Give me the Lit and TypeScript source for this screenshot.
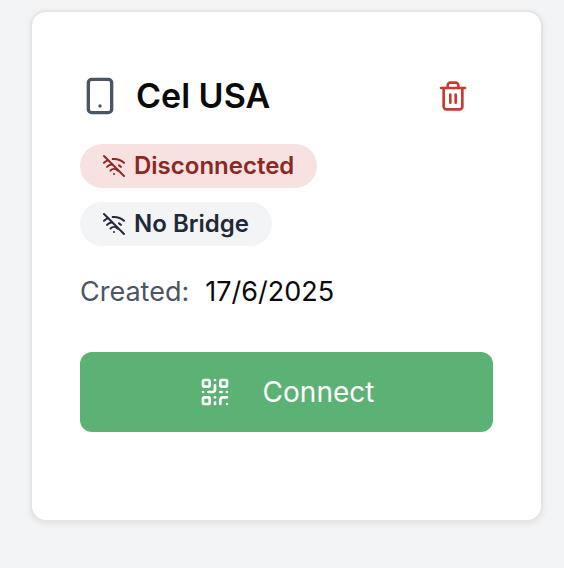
import { LitElement, html, svg, css } from "lit";
import { customElement, property } from "lit/decorators.js";

const glyphs = {
  phone: svg`<rect width="14" height="20" x="5" y="2" rx="2" ry="2"/><path d="M12 18h.01"/>`,
  trash: svg`<path d="M3 6h18"/><path d="M19 6v14c0 1-1 2-2 2H7c-1 0-2-1-2-2V6"/><path d="M8 6V4c0-1 1-2 2-2h4c1 0 2 1 2 2v2"/><path d="M10 11v6"/><path d="M14 11v6"/>`,
  wifiOff: svg`<path d="M12 20h.01"/><path d="M8.5 16.429a5 5 0 0 1 7 0"/><path d="M5 12.859a10 10 0 0 1 5.17-2.69"/><path d="M19 12.859a10 10 0 0 0-2.007-1.523"/><path d="M2 8.82a15 15 0 0 1 4.177-2.643"/><path d="M22 8.82a15 15 0 0 0-11.288-3.764"/><path d="m2 2 20 20"/>`,
  qr: svg`<rect width="5" height="5" x="3" y="3" rx="1"/><rect width="5" height="5" x="16" y="3" rx="1"/><rect width="5" height="5" x="3" y="16" rx="1"/><path d="M21 16h-3a2 2 0 0 0-2 2v3"/><path d="M21 21v.01"/><path d="M12 7v3a2 2 0 0 1-2 2H7"/><path d="M3 12h.01"/><path d="M12 3h.01"/><path d="M12 16v.01"/><path d="M16 12h1"/><path d="M21 12v.01"/><path d="M12 21v-1"/>`,
};

@customElement("line-icon")
export class LineIcon extends LitElement {
  @property() name: keyof typeof glyphs = "phone";

  static styles = css`
    :host {
      display: block;
      flex: none;
    }
    .glyph {
      display: block;
      width: 100%;
      height: 100%;
      fill: none;
      stroke: currentColor;
      stroke-width: 2;
      stroke-linecap: round;
      stroke-linejoin: round;
    }
  `;

  render() {
    return html`<svg class="glyph" viewBox="0 0 24 24" aria-hidden="true">${glyphs[this.name]}</svg>`;
  }
}

@customElement("app-root")
export class AppRoot extends LitElement {
  static styles = css`
    :host {
      display: block;
      box-sizing: border-box;
      min-height: 100vh;
      padding: 10px 21px 40px 30px;
      background: #f3f4f6;
      color: #0a0a0a;
      font-family: Inter, "Liberation Sans", sans-serif;
      font-size: 28px;
      line-height: 40px;
    }
    .card {
      padding: 46px 48px 88px;
      border: 2px solid #e5e5e5;
      border-radius: 16px;
      background: #fff;
      box-shadow: 0 2px 6px rgb(0 0 0 / 8%);
    }
    .head {
      display: flex;
      align-items: center;
      justify-content: space-between;
      height: 76px;
    }
    .name {
      display: flex;
      align-items: center;
      gap: 16px;
    }
    .title {
      margin: 0;
      font-size: 34px;
      font-weight: 600;
    }
    .phone {
      width: 40px;
      height: 40px;
      color: #4b5563;
    }
    .remove {
      padding: 16px 24px;
      border: 0;
      border-radius: 12px;
      background: none;
      color: #c93a2f;
      cursor: pointer;
    }
    .icon {
      width: 32px;
      height: 32px;
    }
    .badges {
      display: flex;
      flex-direction: column;
      align-items: flex-start;
      gap: 14px;
      margin-top: 10px;
    }
    .badge {
      display: flex;
      align-items: center;
      gap: 8px;
      padding: 6px 23px 6px 22px;
      border-radius: 22px;
      font-size: 24px;
      font-weight: 600;
      line-height: 32px;
    }
    .small {
      width: 24px;
      height: 24px;
    }
    .off {
      background: #f8e2e1;
      color: #8c2822;
    }
    .neutral {
      background: #f3f4f6;
      color: #1f2937;
    }
    .created {
      display: flex;
      gap: 16px;
      margin: 26px 0 40px;
      font-size: 27px;
    }
    .label {
      color: #4b5563;
    }
    .value {
      margin: 0;
    }
    .connect {
      display: flex;
      align-items: center;
      justify-content: center;
      gap: 32px;
      width: 100%;
      padding: 20px 32px;
      border: 0;
      border-radius: 12px;
      background: #5cb274;
      color: #fff;
      font: inherit;
      cursor: pointer;
    }
  `;

  render() {
    return html`
      <article class="card">
        <header class="head">
          <div class="name">
            <line-icon class="phone" name="phone"></line-icon>
            <h3 class="title">Cel USA</h3>
          </div>
          <button class="remove" type="button" aria-label="Delete">
            <line-icon class="icon" name="trash"></line-icon>
          </button>
        </header>
        <div class="badges">
          <div class="badge off">
            <line-icon class="small" name="wifiOff"></line-icon>Disconnected
          </div>
          <div class="badge neutral">
            <line-icon class="small" name="wifiOff"></line-icon>No Bridge
          </div>
        </div>
        <dl class="created">
          <dt class="label">Created:</dt>
          <dd class="value">17/6/2025</dd>
        </dl>
        <button class="connect" type="button">
          <line-icon class="icon" name="qr"></line-icon>Connect
        </button>
      </article>
    `;
  }
}
